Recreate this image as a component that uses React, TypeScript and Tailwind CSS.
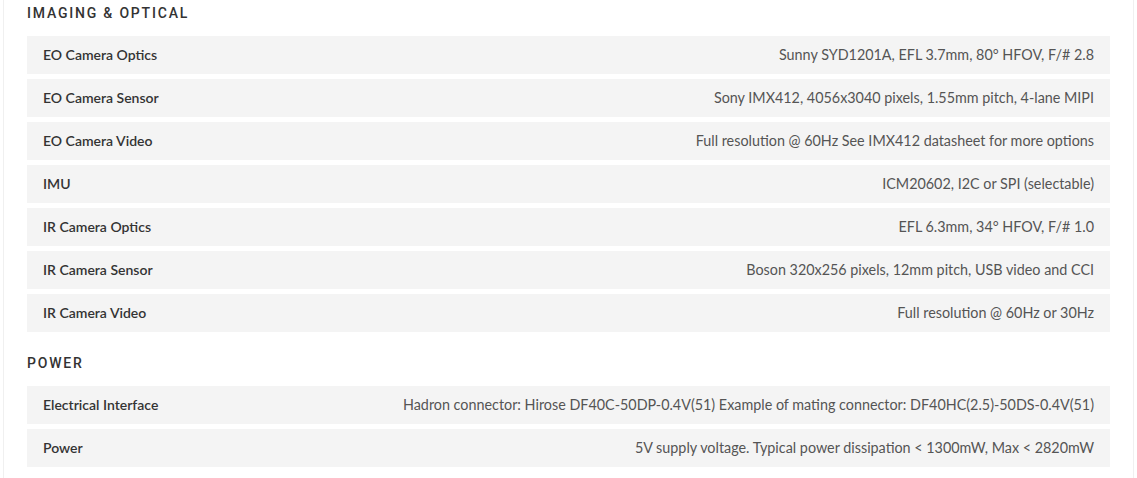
import React from "react";

const sections: { title: string; rows: [string, string][] }[] = [
  {
    title: "IMAGING & OPTICAL",
    rows: [
      ["EO Camera Optics", "Sunny SYD1201A, EFL 3.7mm, 80° HFOV, F/# 2.8"],
      ["EO Camera Sensor", "Sony IMX412, 4056x3040 pixels, 1.55mm pitch, 4-lane MIPI"],
      ["EO Camera Video", "Full resolution @ 60Hz See IMX412 datasheet for more options"],
      ["IMU", "ICM20602, I2C or SPI (selectable)"],
      ["IR Camera Optics", "EFL 6.3mm, 34° HFOV, F/# 1.0"],
      ["IR Camera Sensor", "Boson 320x256 pixels, 12mm pitch, USB video and CCI"],
      ["IR Camera Video", "Full resolution @ 60Hz or 30Hz"],
    ],
  },
  {
    title: "POWER",
    rows: [
      ["Electrical Interface", "Hadron connector: Hirose DF40C-50DP-0.4V(51) Example of mating connector: DF40HC(2.5)-50DS-0.4V(51)"],
      ["Power", "5V supply voltage. Typical power dissipation < 1300mW, Max < 2820mW"],
    ],
  },
];

export default function App() {
  return (
    <div className="w-[1137px] h-[478px] bg-white overflow-hidden">
      <div className="ml-[3px] w-[1131px] h-full border-x border-[#f0f0f0] pl-[23px] pr-[23px]">
        {sections.map((s, i) => (
          <div key={s.title} className={i > 0 ? "mt-[18px]" : ""}>
            <div className="h-[26px] leading-[26px] text-[14px] font-medium tracking-[1.8px] text-[#333] mb-[10px] font-['Roboto',sans-serif]">
              {s.title}
            </div>
            <div className="flex flex-col gap-[5px]">
              {s.rows.map(([k, v]) => (
                <div
                  key={k}
                  className="h-[38px] bg-[#f4f4f4] flex items-center justify-between px-[16px] font-['Lato','Open_Sans',sans-serif]"
                >
                  <span className="text-[14px] font-semibold text-[#333] -mt-[1px]">{k}</span>
                  <span className="text-[14.35px] text-[#555]">{v}</span>
                </div>
              ))}
            </div>
          </div>
        ))}
      </div>
    </div>
  );
}
